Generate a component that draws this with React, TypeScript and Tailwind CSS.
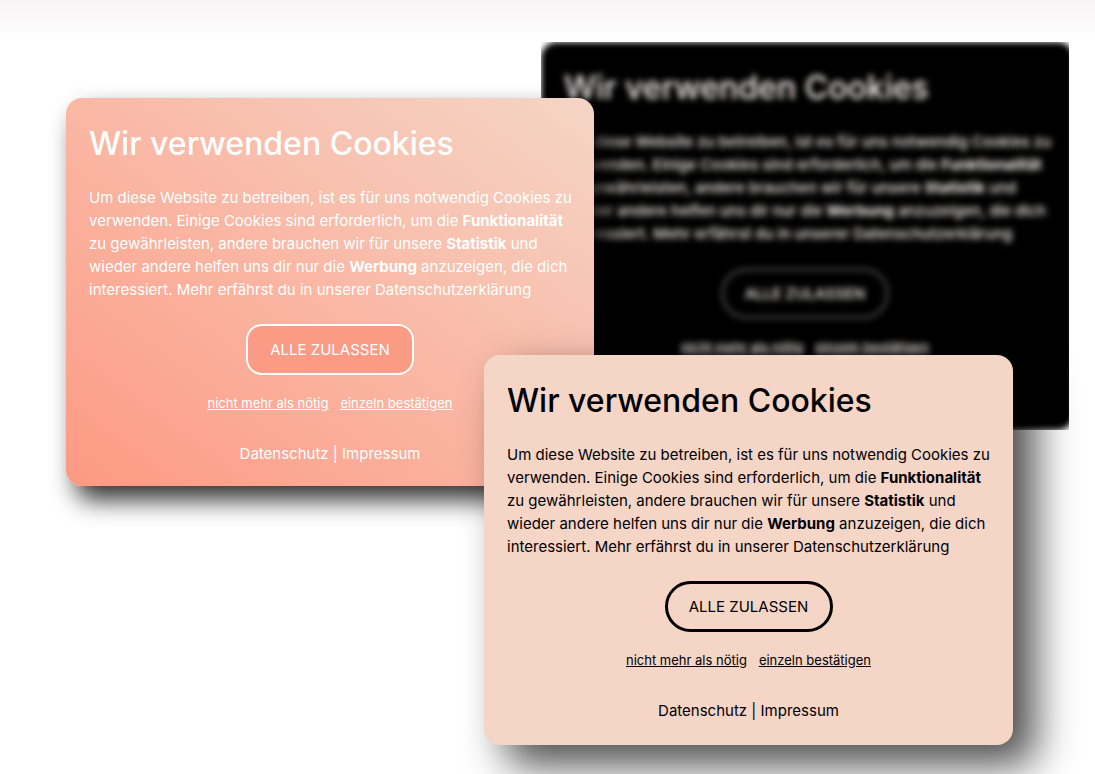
type CardStyle = {
  place: string;
  card: string;
  button: string;
};

const styles: Record<"dark" | "gradient" | "plain", CardStyle> = {
  dark: {
    place: "absolute left-[541px] top-[42px] overflow-hidden",
    card: "-mr-[5px] w-[533px] bg-black pr-7 pb-5 font-medium text-[#fdf6f3] blur-[3px]",
    button: "rounded-full border-[3px] border-[#444444]",
  },
  gradient: {
    place: "absolute left-[66px] top-[98px]",
    card: "w-[528px] bg-linear-to-tr from-[#fc9983] to-[#f4d5c6] pb-5 text-white shadow-[10px_14px_25px_rgba(0,0,0,0.8)]",
    button: "rounded-2xl border-2 border-white bg-[#fb9b86]",
  },
  plain: {
    place: "absolute left-[484px] top-[355px]",
    card: "w-[529px] bg-[#f4d5c6] pb-[22px] text-black shadow-[22px_20px_42px_rgba(0,0,0,0.7)]",
    button: "rounded-full border-[3px] border-black",
  },
};

function CookieCard({ variant }: { variant: keyof typeof styles }) {
  const s = styles[variant];
  return (
    <div className={s.place}>
      <section className={`rounded-2xl px-[23px] pt-6 ${s.card}`}>
        <h2 className="text-[32px] leading-[43px] font-medium whitespace-nowrap">
          Wir verwenden Cookies
        </h2>
        <p className="mt-[21px] text-[15px] leading-[23px] whitespace-nowrap">
          Um diese Website zu betreiben, ist es für uns notwendig Cookies zu
          <br />
          verwenden. Einige Cookies sind erforderlich, um die <b>Funktionalität</b>
          <br />
          zu gewährleisten, andere brauchen wir für unsere <b>Statistik</b> und
          <br />
          wieder andere helfen uns dir nur die <b>Werbung</b> anzuzeigen, die dich
          <br />
          interessiert. Mehr erfährst du in unserer Datenschutzerklärung
        </p>
        <div className="mt-[23px] flex flex-col items-center">
          <button
            type="button"
            className={`h-[51px] w-[168px] pt-0.5 text-[15px] whitespace-nowrap ${s.button}`}
          >
            ALLE ZULASSEN
          </button>
          <div className="mt-[18px] flex gap-3 text-[13px] leading-5 underline">
            <a href="#notwendig">nicht mehr als nötig</a>
            <a href="#einzeln">einzeln bestätigen</a>
          </div>
          <div className="mt-[29px] text-[15px] leading-6">
            <a href="#datenschutz">Datenschutz</a> | <a href="#impressum">Impressum</a>
          </div>
        </div>
      </section>
    </div>
  );
}

export default function App() {
  return (
    <main className="relative min-h-screen overflow-hidden bg-white font-['Inter',sans-serif]">
      <div className="h-10 bg-linear-to-b from-[#f7f4f5] to-white" />
      <CookieCard variant="dark" />
      <CookieCard variant="gradient" />
      <CookieCard variant="plain" />
    </main>
  );
}
